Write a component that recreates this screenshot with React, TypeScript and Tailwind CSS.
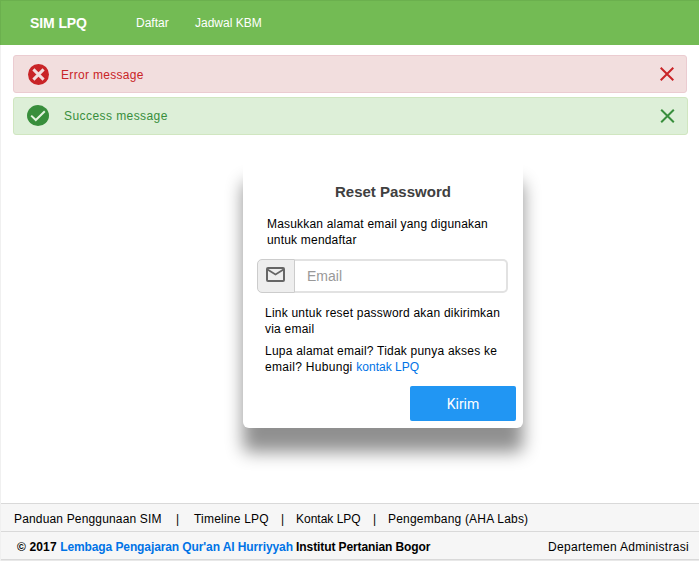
import React from "react";

function ErrorIcon() {
  return (
    <svg className="h-[21px] w-[21px]" viewBox="0 0 21 21">
      <circle cx="10.5" cy="10.5" r="10.5" fill="#c92427" />
      <path d="M5.4 5.4l10.2 10.2M15.6 5.4l-10.2 10.2" stroke="#f2dede" strokeWidth="3" />
    </svg>
  );
}

function SuccessIcon() {
  return (
    <svg className="h-[22px] w-[22px]" viewBox="0 0 22 22">
      <ellipse cx="11" cy="10.6" rx="11" ry="10.5" fill="#388e3c" />
      <path d="M4.2 10.6l4.6 4.4 9-8.8" fill="none" stroke="#e4f3e0" strokeWidth="2" />
    </svg>
  );
}

function CloseIcon({ className }: { className: string }) {
  return (
    <svg className={className} viewBox="0 0 14 14" fill="none" stroke="currentColor" strokeWidth="2">
      <path d="M0.7 0.7l12.6 12.6M13.3 0.7L0.7 13.3" />
    </svg>
  );
}

function MailIcon() {
  return (
    <svg className="h-[15px] w-[19px]" viewBox="0 0 19 15" fill="none" stroke="#666" strokeWidth="2">
      <rect x="1" y="1" width="17" height="13" rx="1" />
      <path d="M1.5 2.5l8 5 8-5" strokeWidth="1.8" />
    </svg>
  );
}

export default function App() {
  return (
    <div className="flex h-[561px] w-[699px] flex-col overflow-hidden bg-white font-['Liberation_Sans',Arial,sans-serif] text-[12px] leading-[16px] text-black">
      <header className="flex h-[45px] shrink-0 items-center border-l border-t border-[#6bb04e] bg-[#73bb54] pl-[29px] text-white">
        <span className="w-[106px] text-[14px] font-bold tracking-[-0.1px]">SIM LPQ</span>
        <nav className="flex">
          <span className="w-[59px]">Daftar</span>
          <span>Jadwal KBM</span>
        </nav>
      </header>

      <div className="flex flex-1 flex-col border-l border-[#f0f0f0]">
        <section className="flex shrink-0 flex-col gap-[4px] pl-[12px] pt-[10px]">
          <div className="flex h-[38px] w-[674px] items-center rounded-[3px] border border-[#ebccd1] bg-[#f2dede] pl-[14px] pr-[12px] text-[#c92427]">
            <ErrorIcon />
            <span className="ml-[12px] flex-1 pt-[2px] tracking-[0.32px]">Error message</span>
            <CloseIcon className="h-[14px] w-[14px]" />
          </div>
          <div className="flex h-[38px] w-[675px] items-center rounded-[3px] border border-[#d0e6c0] bg-[#ddefd8] pl-[13px] pr-[12px] text-[#388e3c]">
            <SuccessIcon />
            <span className="ml-[15px] flex-1 tracking-[0.43px]">Success message</span>
            <CloseIcon className="h-[14px] w-[15px]" />
          </div>
        </section>

        <main className="flex-1 pl-[242px] pt-[23px]">
          <div className="flex h-[270px] w-[280px] flex-col rounded-[6px] bg-white shadow-[0_24px_17px_rgba(0,0,0,0.44)]">
            <h1 className="mt-[24px] pl-[92px] text-[15px] font-bold leading-[20px] text-[#404040]">Reset Password</h1>
            <p className="mt-[14px] pl-[24px] tracking-[0.19px]">
              Masukkan alamat email yang digunakan
              <br />
              untuk mendaftar
            </p>
            <div className="ml-[14px] mt-[11px] flex h-[34px] w-[251px] shrink-0">
              <div className="flex w-[38px] items-center rounded-l-[5px] border border-[#ccc] bg-[#eee] pb-[3px] pl-[8px]">
                <MailIcon />
              </div>
              <div className="flex flex-1 items-center rounded-r-[5px] border-y-2 border-r-2 border-[#e2e2e2] pl-[12px] text-[14px] text-[#999]">
                Email
              </div>
            </div>
            <p className="mt-[12px] pl-[22px] tracking-[0.22px]">
              Link untuk reset password akan dikirimkan
              <br />
              via email
            </p>
            <p className="mt-[6px] pl-[22px] tracking-[0.22px]">
              Lupa alamat email? Tidak punya akses ke
              <br />
              <span className="tracking-[0.3px]">email? Hubungi </span>
              <a className="tracking-[0.02px] text-[#0073e6]">kontak LPQ</a>
            </p>
            <button className="ml-[167px] mt-[11px] h-[35px] w-[106px] shrink-0 rounded-[2px] bg-[#2196f3] font-['Roboto',sans-serif] text-[14px] text-white">
              Kirim
            </button>
          </div>
        </main>

        <footer className="flex h-[58px] shrink-0 flex-col border-b border-[#e8e8e8] bg-[#f6f6f6]">
          <div className="flex h-[28px] items-center border-t border-[#d9d9d9] pl-[13px] pt-[3px]">
            <span className="w-[162px] tracking-[0.16px]">Panduan Penggunaan SIM</span>
            <span className="w-[18px]">|</span>
            <span className="w-[87px] tracking-[0.22px]">Timeline LPQ</span>
            <span className="w-[15px]">|</span>
            <span className="w-[77px]">Kontak LPQ</span>
            <span className="w-[15px]">|</span>
            <span className="tracking-[0.2px]">Pengembang (AHA Labs)</span>
          </div>
          <div className="flex h-[29px] items-center justify-between border-y border-[#d9d9d9] pl-[16px] pr-[10px] pt-[3px]">
            <span className="font-bold tracking-[-0.1px]">
              <span className="tracking-[0.14px]">© 2017 </span>
              <a className="text-[#0073e6]">Lembaga Pengajaran Qur'an Al Hurriyyah</a> Institut Pertanian Bogor
            </span>
            <span className="tracking-[0.3px]">Departemen Administrasi</span>
          </div>
        </footer>
      </div>
    </div>
  );
}
